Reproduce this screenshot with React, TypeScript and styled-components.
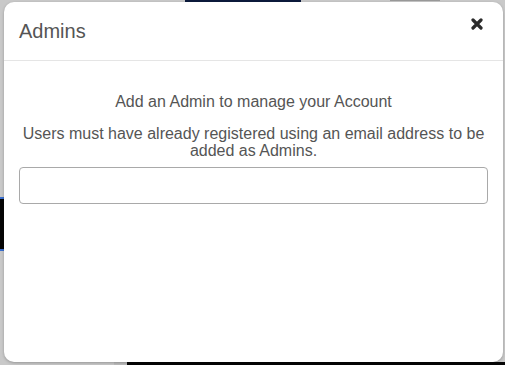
import styled, { createGlobalStyle } from 'styled-components';

const GlobalStyle = createGlobalStyle`
  html, body {
    margin: 0;
    padding: 0;
    width: 505px;
    height: 365px;
    overflow: hidden;
  }
  * {
    box-sizing: border-box;
  }
`;

// dimmed page behind the dialog; the patches are bits of the page showing through
const Backdrop = styled.div`
  width: 505px;
  height: 365px;
  padding: 2px 2px 3px 4px;
  display: flex;
  background:
    linear-gradient(#0c1a3c, #0c1a3c) 185px 0 / 116px 2px no-repeat,
    linear-gradient(#9a9a9a, #9a9a9a) 390px 0 / 50px 1px no-repeat,
    linear-gradient(#3a6fd0, #3a6fd0) 0 197px / 4px 2px no-repeat,
    linear-gradient(#3a6fd0, #3a6fd0) 0 249px / 4px 2px no-repeat,
    linear-gradient(#050505, #050505) 0 199px / 4px 50px no-repeat,
    linear-gradient(#050505, #050505) 127px 362px / 378px 3px no-repeat,
    linear-gradient(#bcbcbc, #bcbcbc) 114px 362px / 13px 3px no-repeat,
    #c9c9c9;
  font-family: 'Liberation Sans', Arial, Helvetica, sans-serif;
`;

const Modal = styled.div`
  flex: 1;
  display: flex;
  flex-direction: column;
  background-color: #ffffff;
  border-radius: 10px;
  box-shadow: 0 1px 3px rgba(0, 0, 0, 0.25);
  overflow: hidden;
`;

const Header = styled.div`
  display: flex;
  justify-content: space-between;
  align-items: flex-start;
  padding: 16px 20px 16px 15px;
  border-bottom: 1px solid #e5e5e5;
`;

const Title = styled.h4`
  margin: 0;
  color: #555555;
  font-size: 20px;
  font-weight: normal;
  line-height: 26px;
`;

const CloseButton = styled.button`
  display: flex;
  margin: 0;
  padding: 0;
  border: none;
  background: none;
  color: #2b2b2b;
  cursor: pointer;
`;

const Body = styled.div`
  display: flex;
  flex-direction: column;
  padding: 15px;
`;

const Text = styled.p<{ $top?: number; $bottom?: number }>`
  margin: ${({ $top = 0 }) => $top}px 0 ${({ $bottom = 0 }) => $bottom}px;
  color: #555555;
  font-size: 16px;
  line-height: 17px;
  text-align: center;
`;

const EmailInput = styled.input`
  height: 37px;
  width: 100%;
  padding: 6px 12px;
  border: 1px solid #a9a9a9;
  border-radius: 4px;
  font-family: inherit;
  font-size: 16px;
  color: #555555;
  outline: none;
`;

function CloseIcon() {
  return (
    <svg width="12" height="12" viewBox="0 0 12 12" aria-hidden="true">
      <path
        d="M2 2L10 10M10 2L2 10"
        stroke="currentColor"
        strokeWidth="3.2"
        strokeLinecap="round"
      />
    </svg>
  );
}

function App() {
  return (
    <>
      <GlobalStyle />
      <Backdrop>
        <Modal>
          <Header>
            <Title>Admins</Title>
            <CloseButton aria-label="Close">
              <CloseIcon />
            </CloseButton>
          </Header>
          <Body>
            <Text $top={17} $bottom={15}>
              Add an Admin to manage your Account
            </Text>
            <Text $bottom={8}>
              Users must have already registered using an email address to be
              added as Admins.
            </Text>
            <EmailInput type="email" />
          </Body>
        </Modal>
      </Backdrop>
    </>
  );
}

export default App;
